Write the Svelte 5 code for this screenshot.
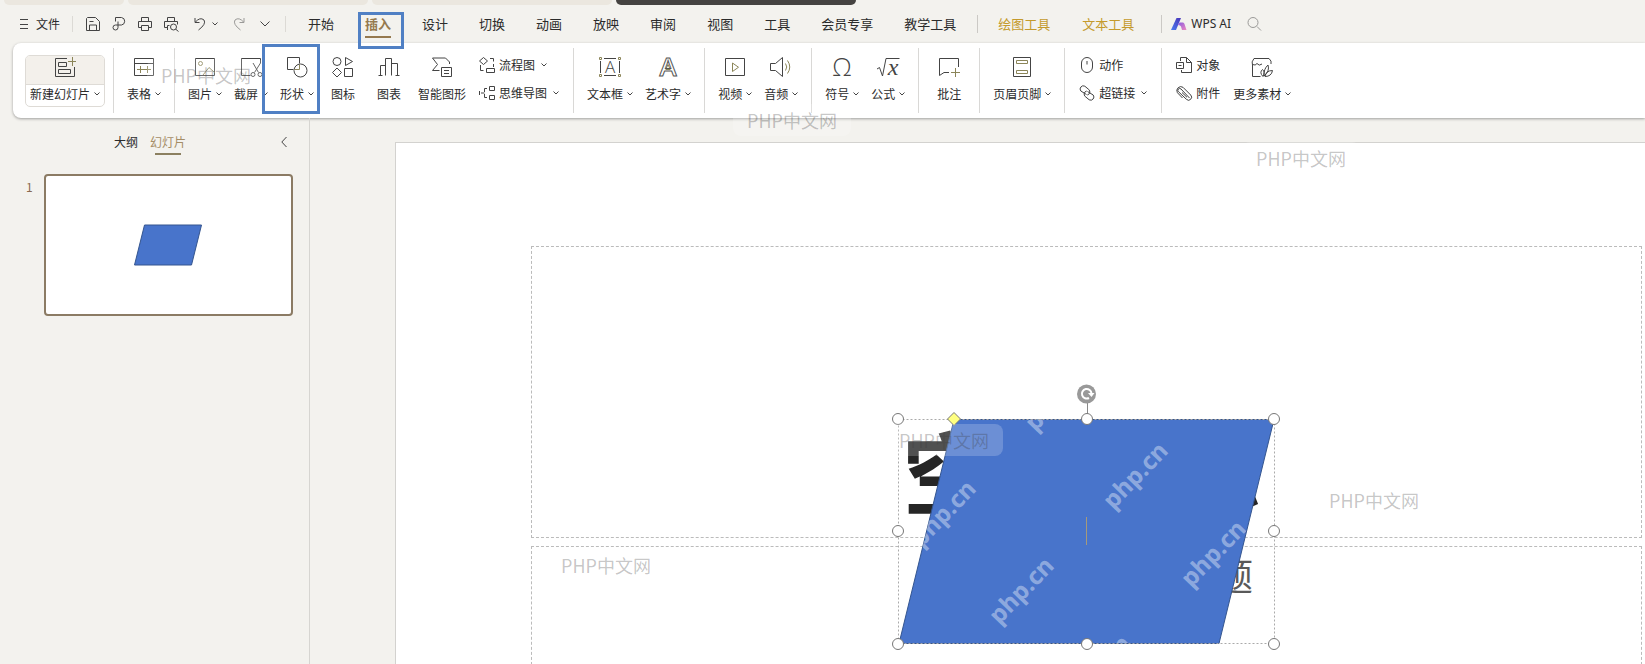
<script lang="ts">
    interface Icon {
        line: string;
        accent?: string;
    }

    interface Tool {
        label: string;
        icon: string;
        menu?: boolean;
        marked?: boolean;
    }

    interface Group {
        tools?: Tool[];
        stack?: Tool[];
        after?: Tool[];
    }

    // Large ribbon icons sit on a 24px grid, small ones on a 16px grid.
    const ICONS: Record<string, Icon> = {
        table: {
            line: 'M2.5 3.5h19v17h-19z M2.5 8.5h19',
            accent: 'M5 14.5h14 M8.5 11v7 M15.5 11v7',
        },
        picture: {
            line: 'M2.5 3.5h19v17h-19z',
            accent: 'M9.5 8.5a2 2 0 1 1-4 0a2 2 0 1 1 4 0z M10 20l6-7.500 5.500 5',
        },
        capture: {
            line: 'M21.500 8V3.500h-19v17h9 M14 8l5.500 9.500 M21.500 8l-6 9.500 M16 19.500a2 2 0 1 1-4 0a2 2 0 1 1 4 0z M23 19.500a2 2 0 1 1-4 0a2 2 0 1 1 4 0z',
        },
        shapes: {
            line: 'M8.500 14.500h-6v-12h12v6 M22 15.500a6.500 6.500 0 1 1-13 0a6.500 6.500 0 1 1 13 0z',
            accent: 'M9.500 14.500h5v-5',
        },
        icons: {
            line: 'M10 6.500a4 4 0 1 1-8 0a4 4 0 1 1 8 0z M14.500 2.500v8l7-4z M6 13l4.500 4.500-4.500 4.500-4.500-4.500z M13.500 13.500h8v8h-8z',
        },
        chart: {
            line: 'M1.500 20.500h4 M3.500 20.500v-10h5 M8.500 20.500v-17h6v17 M14.500 8.500h6v12 M18.500 20.500h4',
        },
        smart: {
            line: 'M9.500 15.500h-7l5-6-5-6.500h13l4 4v2 M11.500 12.500h10v9h-10z M14 15.500h5 M14 18.500h5',
        },
        textbox: {
            line: 'M2.500 6v12 M21.500 6v12 M6 3.500h12 M6 20.500h12',
            accent: 'M1.500 2.500h2v2h-2z M20.500 2.500h2v2h-2z M1.500 19.500h2v2h-2z M20.500 19.500h2v2h-2z',
        },
        wordart: { line: '', accent: 'M12 9.500l2.200 5h-4.400z' },
        video: { line: 'M2.500 3.500h19v17h-19z', accent: 'M9.500 8v8.500l6-4.250z' },
        audio: {
            line: 'M1.500 8.500h5l7-6v19l-7-6h-5z',
            accent: 'M16.500 8.500q2.500 3.500 0 7 M18.500 5.500q4.500 6.500 0 13',
        },
        symbol: { line: '' },
        formula: { line: 'M1 14l2.500-1.500 3 8.500 3.500-17.500h13.500' },
        comment: {
            line: 'M12 17.500H7l-4.500 3V3.500h19v8.500',
            accent: 'M14 17.500h9 M18.500 13v9',
        },
        headerFooter: {
            line: 'M3.500 2.500h17v19h-17z',
            accent: 'M6.500 5.500h11v3h-11z M6.500 15.500h11v3h-11z',
        },
        material: {
            line: 'M2.500 10v11.500h8 M2.500 10q-1.500-3 1.500-6.500h15q3 2.500 2 5.500 M2.500 9.500q3 1.500 4.500-1 2 3 5 .5 M13 21.500q-4-4-.5-7 3 2 .5 7z M14 21q-.5-7 4-11 2 6-4 11z M15 21.500q1-6 7.500-6-1 6-7.500 6z',
        },
        flow: {
            line: 'M4.500 .5l4 3.500-4 3.500-4-3.500z M11 1.500h3.500v3 M14.500 7v3 M7.500 11.500h8v4h-8z M1.500 8v5.500h3',
        },
        mind: {
            line: 'M10.500 1.500h5v4h-5z M10.500 10.500h5v4h-5z M8 3.500H5.500v3.500 M5.500 9v3.500h2.500 M5.500 8H2 M.5 6v4',
        },
        mouse: {
            line: 'M2.500 6a5 5 0 0 1 11 0v4a5 5 0 0 1-11 0z M8 4v3.500',
        },
        link: {
            line: 'M7.500 9.500L1.800 6a3.200 3.200 0 0 1 4-4.800l4 3.300a3.200 3.200 0 0 1-1.500 5.500 M8.500 6.500l5.700 3.500a3.200 3.200 0 0 1-4 4.800l-4-3.300a3.200 3.200 0 0 1 1.500-5.500',
        },
        object: {
            line: 'M4.500 4V.5h6l5 5v10h-10V13 M10.500 .5v5h5 M.5 5.500h7v6h-7z M2.500 8.500h3',
        },
        clip: {
            line: 'M13.500 13l-8.500-9a1.800 1.800 0 0 0-2.600 2.600l8 7.700a3 3 0 0 0 4.300-4.300L7 2.300a4 4 0 0 0-5.600 5.400l5.100 5.300 M6 7.500l5 4.800',
        },
        save: {
            line: 'M1.500 2.500l1-1h8l4 4v9h-13z M4.500 14v-5h7v5 M4.500 5.500h4',
        },
        export: {
            line: 'M4.500 5.500v-4h6a3.800 3.800 0 0 1 0 7.500H7v2.500a2.500 2.500 0 1 1-2.500-2.500H7V5.500',
        },
        print: {
            line: 'M4.500 5V1.500h7V5 M4 11.500H1.500v-6h13v6H12 M4.500 9.500h7v5h-7z',
        },
        preview: {
            line: 'M4.500 5V1.500h7V5 M4 11.500H1.500v-6h13v3 M4.500 14V9.500h2 M13.500 11a3 3 0 1 1-6 0a3 3 0 1 1 6 0z M12.700 13.200l2.800 2.300',
        },
        undo: { line: 'M3 2v4.500h4.500 M3 6.500q5-6 9-2.500 2.500 4-5.500 10' },
        redo: { line: 'M13 2v4.500H8.500 M13 6.500q-5-6-9-2.500-2.500 4 5.500 10' },
        search: { line: 'M11 6.500a5 5 0 1 1-10 0a5 5 0 1 1 10 0z M10 10.500l4 4' },
    };

    const TABS = ['开始', '插入', '设计', '切换', '动画', '放映', '审阅', '视图', '工具', '会员专享', '教学工具'];
    const CONTEXT_TABS = ['绘图工具', '文本工具'];

    const GROUPS: Group[] = [
        { tools: [{ label: '表格', icon: 'table', menu: true }] },
        {
            tools: [
                { label: '图片', icon: 'picture', menu: true },
                { label: '截屏', icon: 'capture', menu: true },
                { label: '形状', icon: 'shapes', menu: true, marked: true },
                { label: '图标', icon: 'icons' },
                { label: '图表', icon: 'chart' },
                { label: '智能图形', icon: 'smart' },
            ],
            stack: [
                { label: '流程图', icon: 'flow', menu: true },
                { label: '思维导图', icon: 'mind', menu: true },
            ],
        },
        {
            tools: [
                { label: '文本框', icon: 'textbox', menu: true },
                { label: '艺术字', icon: 'wordart', menu: true },
            ],
        },
        {
            tools: [
                { label: '视频', icon: 'video', menu: true },
                { label: '音频', icon: 'audio', menu: true },
            ],
        },
        {
            tools: [
                { label: '符号', icon: 'symbol', menu: true },
                { label: '公式', icon: 'formula', menu: true },
            ],
        },
        { tools: [{ label: '批注', icon: 'comment' }] },
        { tools: [{ label: '页眉页脚', icon: 'headerFooter', menu: true }] },
        {
            stack: [
                { label: '动作', icon: 'mouse' },
                { label: '超链接', icon: 'link', menu: true },
            ],
        },
        {
            stack: [
                { label: '对象', icon: 'object' },
                { label: '附件', icon: 'clip' },
            ],
            after: [{ label: '更多素材', icon: 'material', menu: true }],
        },
    ];

    // Resize handles, in the coordinates of the selection drawing.
    const HANDLES = [
        [11, 39], [200, 39], [387, 39],
        [11, 151], [387, 151],
        [11, 264], [200, 264], [387, 264],
    ];
    const TILES = [[172, 19], [250, 97], [58, 135], [328, 175], [136, 212], [213, 290]];

    // Page watermarks: left edge and top edge.
    const STAMPS = [[147, 59], [733, 104], [1242, 142], [1315, 484], [547, 549], [885, 424]];

    let activeTab = $state('插入');
    let activePane = $state('幻灯片');
</script>

{#snippet glyph(name: string, size: number)}
    <svg class="icon" width={size} height={size} viewBox="0 0 {size} {size}" aria-hidden="true">
        <path d={ICONS[name].line} />
        {#if ICONS[name].accent}
            <path class="accent" d={ICONS[name].accent} />
        {/if}
        {#if name === 'textbox'}
            <text class="letter" x="12" y="18" font-size="17">A</text>
        {:else if name === 'wordart'}
            <text class="letter outline" x="12" y="21" font-size="26">A</text>
        {:else if name === 'symbol'}
            <text class="letter" x="12" y="21" font-size="25">Ω</text>
        {:else if name === 'formula'}
            <text class="letter italic" x="17" y="20" font-size="24">x</text>
        {/if}
    </svg>
{/snippet}

{#snippet caret()}
    <svg class="caret" width="6" height="4" viewBox="0 0 6 4" aria-hidden="true">
        <path d="M.5 .5L3 3 5.500 .5" />
    </svg>
{/snippet}

{#snippet bigTool(tool: Tool)}
    <button class="tool" class:marked={tool.marked}>
        {@render glyph(tool.icon, 24)}
        <span class="label">
            {tool.label}
            {#if tool.menu}{@render caret()}{/if}
        </span>
    </button>
{/snippet}

<div class="app">
    <div class="documents" aria-hidden="true">
        <span></span>
        <span></span>
        <span></span>
        <span class="current"></span>
    </div>

    <header class="menubar">
        <button class="file">
            <svg class="icon" width="8" height="12" viewBox="0 0 8 12" aria-hidden="true">
                <path d="M0 1.500h8 M0 6.500h8 M0 10.500h8" />
            </svg>
            文件
        </button>
        <span class="sep"></span>
        <div class="quick">
            <button aria-label="保存">{@render glyph('save', 16)}</button>
            <button aria-label="输出">{@render glyph('export', 16)}</button>
            <button aria-label="打印">{@render glyph('print', 16)}</button>
            <button aria-label="打印预览">{@render glyph('preview', 16)}</button>
            <button class="undo" aria-label="撤销">{@render glyph('undo', 16)}{@render caret()}</button>
            <button class="faded" aria-label="恢复">{@render glyph('redo', 16)}</button>
            <button class="more" aria-label="更多">
                <svg class="icon" width="10" height="6" viewBox="0 0 10 6" aria-hidden="true">
                    <path d="M.5 .5L5 5 9.500 .5" />
                </svg>
            </button>
        </div>
        <span class="sep"></span>
        <nav class="tabs">
            {#each TABS as tab}
                <button class="tab" class:active={tab === activeTab} onclick={() => (activeTab = tab)}>{tab}</button>
            {/each}
        </nav>
        <span class="sep tall"></span>
        <nav class="tabs context">
            {#each CONTEXT_TABS as tab}
                <button class="tab" onclick={() => (activeTab = tab)}>{tab}</button>
            {/each}
        </nav>
        <span class="sep tall"></span>
        <button class="ai">
            <svg width="16" height="12" viewBox="0 0 16 12" aria-hidden="true">
                <defs>
                    <linearGradient id="ai-blue" x1="0" y1="1" x2="1" y2="0">
                        <stop offset="0" stop-color="#4a7bf0" />
                        <stop offset="1" stop-color="#4a35b8" />
                    </linearGradient>
                    <linearGradient id="ai-pink" x1="0" y1="0" x2="1" y2="1">
                        <stop offset="0" stop-color="#8a5be0" />
                        <stop offset="1" stop-color="#f08ac0" />
                    </linearGradient>
                </defs>
                <path fill="url(#ai-blue)" d="M5.500 0H10L5 12H0z" />
                <path fill="url(#ai-pink)" d="M8.500 4.500h3.500q1 0 1.500 1.500l2 6h-4.500L10 8.500q-.5-1.500-3-1.500z" />
            </svg>
            WPS AI
        </button>
        <button class="faded" aria-label="搜索">{@render glyph('search', 16)}</button>
    </header>

    <section class="ribbon" aria-label="插入">
        <div class="group first">
            <button class="new-slide">
                <span class="face">
                    <svg class="icon" width="24" height="24" viewBox="0 0 24 24" aria-hidden="true">
                        <path d="M14 2.500H2.500v18h19V11 M5.500 6.500h8v4h-8z M5.500 13.500h12v4h-12z" />
                        <path class="accent" d="M15 5.500h8 M19.500 1v9" />
                    </svg>
                </span>
                <span class="label">新建幻灯片{@render caret()}</span>
            </button>
        </div>
        {#each GROUPS as group}
            <div class="group">
                {#each group.tools ?? [] as tool}
                    {@render bigTool(tool)}
                {/each}
                {#if group.stack}
                    <div class="stack">
                        {#each group.stack as tool}
                            <button class="row">
                                {@render glyph(tool.icon, 16)}
                                <span class="label">
                                    {tool.label}
                                    {#if tool.menu}{@render caret()}{/if}
                                </span>
                            </button>
                        {/each}
                    </div>
                {/if}
                {#each group.after ?? [] as tool}
                    {@render bigTool(tool)}
                {/each}
            </div>
        {/each}
    </section>

    <main class="workspace">
        <aside class="outline-pane">
            <div class="pane-tabs">
                {#each ['大纲', '幻灯片'] as pane}
                    <button class:active={pane === activePane} onclick={() => (activePane = pane)}>{pane}</button>
                {/each}
                <button class="collapse" aria-label="收起">
                    <svg class="icon" width="6" height="12" viewBox="0 0 6 12" aria-hidden="true">
                        <path d="M5.500 1L.8 6l4.700 5" />
                    </svg>
                </button>
            </div>
            <div class="slide-item">
                <span class="number">1</span>
                <button class="thumb" aria-label="幻灯片 1">
                    <svg width="68" height="42" viewBox="0 0 68 42" aria-hidden="true">
                        <path class="blue" d="M10.500 1h57l-10 40H.5z" />
                    </svg>
                </button>
            </div>
        </aside>

        <div class="canvas">
            <div class="slide">
                <div class="placeholder title">空白演示</div>
                <div class="placeholder subtitle">单击此处添加副标题</div>

                <svg class="selection" width="400" height="284" viewBox="0 0 400 284" aria-hidden="true">
                    <defs>
                        <clipPath id="shape-clip">
                            <path d="M67 39h320l-55 224H12z" />
                        </clipPath>
                    </defs>
                    <path class="blue" d="M67 39.500h320l-55 224H12z" />
                    <g clip-path="url(#shape-clip)">
                        {#each TILES as [x, y]}
                            <text class="tile" transform="translate({x} {y}) rotate(-46)" y="6">php.cn</text>
                        {/each}
                    </g>
                    <path class="bounds" d="M11.500 39.500h376v224h-376z" />
                    <path class="stem" d="M200.500 22v12" />
                    <path class="cursor" d="M199.500 137v28" />
                    {#each HANDLES as [x, y]}
                        <circle class="handle" cx={x} cy={y} r="5.500" />
                    {/each}
                    <path class="adjust" d="M67 32.500l6.500 6.500-6.500 6.500-6.500-6.500z" />
                    <circle class="rotate" cx="199.500" cy="14" r="9.500" />
                    <path class="turn" d="M202 18a4.800 4.800 0 1 1 2.500-4.500" />
                    <path class="turn-head" d="M201 13h6.500l-3 4z" />
                </svg>
            </div>
        </div>
    </main>

    {#each STAMPS as [x, y]}
        <span class="stamp" style="left: {x}px; top: {y}px">PHP中文网</span>
    {/each}
</div>

<style>
    :global(body) {
        margin: 0;
        background: #f3f2ee;
    }

    .app {
        position: relative;
        display: flex;
        flex-direction: column;
        height: 100vh;
        overflow: hidden;
        background: #f3f2ee;
        color: #2b2b2b;
        font-family: "Noto Sans CJK SC", sans-serif;
        font-size: 12px;
        line-height: 18px;
    }

    button {
        display: flex;
        align-items: center;
        flex-shrink: 0;
        padding: 0;
        border: none;
        background: none;
        color: inherit;
        font: inherit;
        white-space: nowrap;
        cursor: pointer;
    }

    .icon,
    .caret {
        flex-shrink: 0;
        overflow: visible;
        fill: none;
        stroke: #444;
    }

    .accent {
        stroke: #8b8558;
    }

    .letter {
        fill: #444;
        stroke: none;
        font-family: "Open Sans", sans-serif;
        font-weight: 300;
        text-anchor: middle;
    }

    .letter.outline {
        fill: none;
        stroke: #555;
        font-weight: 600;
    }

    .letter.italic {
        font-family: "Liberation Serif", serif;
        font-style: italic;
    }

    /* Document tabs, cut off by the top of the window */
    .documents {
        display: flex;
        flex-shrink: 0;
        gap: 4px;
        height: 5px;
    }

    .documents span {
        width: 240px;
        border-radius: 0 0 6px 6px;
        background: #ebe7df;
    }

    .documents span:first-child {
        width: 120px;
        margin-left: 4px;
    }

    .documents .current {
        background: #454341;
    }

    .menubar {
        display: flex;
        align-items: center;
        flex-shrink: 0;
        height: 38px;
        padding-left: 20px;
    }

    .file {
        gap: 8px;
    }

    .sep {
        flex-shrink: 0;
        width: 1px;
        height: 16px;
        margin: 0 12px;
        background: #dcdad5;
    }

    .sep.tall {
        height: 18px;
        margin: 0 20px 0 21px;
        background: #cbc9c5;
    }

    .context + .sep.tall {
        margin: 0 9px 0 27px;
    }

    .quick {
        display: flex;
        gap: 10px;
    }

    .undo {
        gap: 4px;
        padding: 0 3px;
    }

    .more {
        width: 16px;
        justify-content: center;
    }

    .faded {
        opacity: 0.5;
    }

    .tabs {
        display: flex;
        gap: 31px;
        font-size: 13px;
    }

    .tabs:not(.context) {
        padding-left: 10px;
    }

    .context {
        gap: 32px;
        color: #c49a2c;
    }

    .tab {
        position: relative;
        height: 38px;
    }

    .tab.active {
        color: #95794f;
        font-weight: 700;
    }

    .tab.active::before {
        content: "";
        position: absolute;
        inset: auto 0 5px;
        height: 2px;
        background: #95794f;
    }

    /* Callout frames round the two controls to click */
    .tab.active::after,
    .marked::after {
        content: "";
        position: absolute;
        z-index: 3;
        border: 3px solid #5080c4;
    }

    .tab.active::after {
        inset: 7px -13px -6px -7px;
    }

    .marked::after {
        inset: 1px 0 4px -12px;
    }

    .ai {
        gap: 4px;
        margin-right: 16px;
        font-family: "Noto Sans", sans-serif;
    }

    .ribbon {
        display: flex;
        flex-shrink: 0;
        height: 75px;
        margin-left: 13px;
        border-radius: 8px 0 0 8px;
        background: #fff;
        box-shadow: 0 1px 3px rgba(0, 0, 0, 0.35);
    }

    .group {
        position: relative;
        display: flex;
        padding: 0 7px 0 8px;
    }

    .group:not(.first)::before {
        content: "";
        position: absolute;
        inset: 5px auto 5px 0;
        width: 1px;
        background: #d9d8d6;
    }

    .group.first {
        align-items: center;
        padding: 0 8px 0 12px;
    }

    .new-slide {
        flex-direction: column;
        box-sizing: border-box;
        width: 80px;
        height: 52px;
        border: 1px solid #dedbd6;
        border-radius: 5px;
        overflow: hidden;
    }

    .face {
        display: flex;
        justify-content: center;
        width: 100%;
        height: 28px;
        border-bottom: 1px solid #dedbd6;
        background: #f3f0eb;
    }

    .label {
        display: flex;
        align-items: center;
        gap: 4px;
    }

    .tool {
        position: relative;
        flex-direction: column;
        gap: 6px;
        min-width: 46px;
        padding: 12px 6px 0;
    }

    .stack {
        display: flex;
        flex-direction: column;
        gap: 10px;
        padding: 13px 0 0;
    }

    .row {
        gap: 4px;
        padding: 0 7px;
    }

    .row .label {
        gap: 6px;
    }

    .workspace {
        display: flex;
        flex: 1;
        min-height: 0;
    }

    .outline-pane {
        flex-shrink: 0;
        width: 309px;
        border-right: 1px solid #d6d5d1;
    }

    .pane-tabs {
        display: flex;
        gap: 12px;
        padding: 15px 22px 0 114px;
    }

    .pane-tabs button {
        flex-direction: column;
        padding-bottom: 4px;
    }

    .pane-tabs .active {
        position: relative;
        color: #a58d66;
    }

    .pane-tabs .active::after {
        content: "";
        position: absolute;
        inset: auto 5px 0;
        height: 2px;
        background: #8b8060;
    }

    .pane-tabs .collapse {
        justify-content: center;
        margin-left: auto;
    }

    .slide-item {
        display: flex;
        gap: 11px;
        padding: 19px 16px 0 26px;
    }

    .number {
        padding-top: 4px;
        color: #8a6a50;
    }

    .thumb {
        flex: 1;
        justify-content: center;
        box-sizing: border-box;
        height: 142px;
        border: 2px solid #8b7b64;
        border-radius: 4px;
        background: #fff;
    }

    .blue {
        fill: #4874cb;
        stroke: #34558f;
    }

    .canvas {
        display: flex;
        flex: 1;
        min-width: 0;
        padding: 24px 0 0 85px;
    }

    .slide {
        position: relative;
        flex: 1;
        display: flex;
        flex-direction: column;
        gap: 8px;
        min-width: 0;
        padding: 103px 3px 0 135px;
        border: solid #d3d2cf;
        border-width: 1px 0 0 1px;
        background: #fff;
    }

    .placeholder {
        display: flex;
        justify-content: center;
        box-sizing: border-box;
        flex-shrink: 0;
        border: 1px dashed #bbb;
        white-space: nowrap;
    }

    .title {
        align-items: flex-end;
        height: 292px;
        padding: 0 8px 14px 0;
        color: #262626;
        font-size: 90px;
        line-height: 108px;
        font-weight: 700;
    }

    .subtitle {
        height: 240px;
        padding-top: 3px;
        color: #595959;
        font-size: 37px;
        line-height: 50px;
    }

    .selection {
        position: absolute;
        top: 237px;
        left: calc(50% + 66px - 200px);
        overflow: visible;
    }

    .tile {
        fill: rgba(255, 255, 255, 0.4);
        font-family: "Noto Sans", sans-serif;
        font-size: 24px;
        font-weight: 700;
        text-anchor: middle;
    }

    .bounds {
        fill: none;
        stroke: #aaa;
        stroke-dasharray: 2 2;
    }

    .stem {
        stroke: #888;
    }

    .cursor {
        stroke: #a59a7c;
    }

    .handle {
        fill: #fff;
        stroke: #777;
    }

    .adjust {
        fill: #ffff80;
        stroke: #777;
    }

    .rotate {
        fill: #999;
    }

    .turn {
        fill: none;
        stroke: #fff;
        stroke-width: 2;
    }

    .turn-head {
        fill: #fff;
    }

    .stamp {
        position: absolute;
        z-index: 2;
        padding: 4px 14px;
        border-radius: 8px;
        background: rgba(255, 255, 255, 0.2);
        color: rgba(60, 60, 60, 0.3);
        font-size: 18px;
        line-height: 24px;
        font-weight: 400;
        white-space: nowrap;
        pointer-events: none;
    }
</style>
